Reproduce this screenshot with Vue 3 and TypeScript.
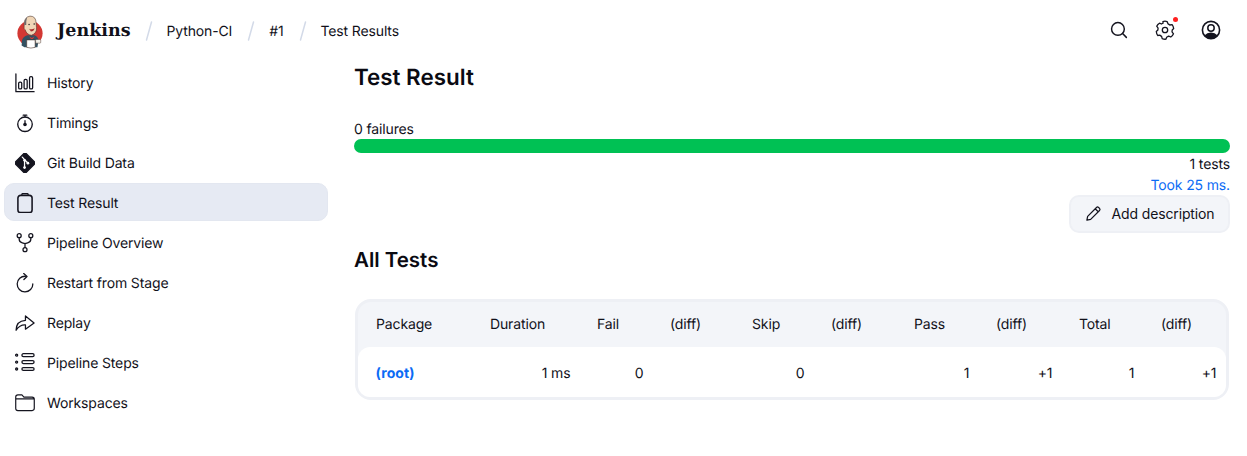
<template>
  <div class="page">
    <header class="topbar">
      <div class="crumbs">
        <a class="brand">
          <svg class="logo" width="28" height="35" viewBox="0 0 30 36">
            <circle cx="15" cy="20" r="13.5" fill="#d33833" />
            <path d="M6 33 L6.5 27 Q8 23 12 22 L20 22 Q24 24 24 28 L23 35 L9 35 Z" fill="#335061" />
            <path d="M8.8 11 Q8.5 2.5 15 1.5 Q21.5 1.5 21.5 9 L22 14 Q22.5 20 16.5 22 Q11.5 21.5 10 16.5 Q8 15.5 8.8 11 Z" fill="#f0d6b7" stroke="#49322a" stroke-width=".6" />
            <path d="M9 11 Q8.5 5 12 2.8 Q10.5 7 11 11 Z" fill="#6d6b6d" />
            <path d="M14 15 Q17 16.5 20 14.5 Q19 18 16 18 Z" fill="#a6322e" />
            <circle cx="14" cy="10.5" r=".8" fill="#231f20" />
            <circle cx="19.5" cy="10" r=".8" fill="#231f20" />
            <path d="M14 23 L17 25 L20 23 L18 26 L16 26 Z" fill="#d33833" />
            <path d="M11.5 27 L20.5 27 L20.5 35 Q16 36.5 11.5 35 Z" fill="#fff" stroke="#49322a" stroke-width=".6" />
            <rect x="21" y="26.5" width="5.5" height="4" rx="1" fill="#f4f1ea" stroke="#49322a" stroke-width=".5" />
          </svg>
          <span class="wordmark">Jenkins</span>
        </a>
        <template v-for="crumb in crumbs" :key="crumb">
          <svg class="slash" width="8" height="20" viewBox="0 0 8 20">
            <path d="M6.5 1 L1.5 19" stroke="#d3dae8" stroke-width="1.5" stroke-linecap="round" />
          </svg>
          <span class="crumb">{{ crumb }}</span>
        </template>
      </div>
      <div class="actions">
        <svg class="search" width="18" height="18" viewBox="0 0 22 22" fill="none" stroke="#14141f" stroke-width="1.8" stroke-linecap="round">
          <circle cx="9.7" cy="9.7" r="7.8" />
          <path d="M15.4 15.4 L20 20" />
        </svg>
        <span class="gear">
          <svg width="22" height="22" viewBox="0 0 22 22" fill="none" stroke="#14141f" stroke-width="1.3" stroke-linejoin="round">
            <path d="M8.9 2.6 Q11 1.8 13.1 2.6 L14 4.8 Q15 5.3 15.8 6 L18.1 5.6 Q19.5 7.4 19.7 9.6 L18.2 11 Q18.2 12 18 12.9 L19.5 14.8 Q18.6 16.9 16.8 18 L14.7 17.1 Q13.8 17.7 12.8 18 L11.9 20.2 Q10 20.4 8.2 19.6 L7.6 17.4 Q6.7 16.9 6 16.2 L3.7 16.5 Q2.5 14.7 2.3 12.5 L3.9 11 Q3.9 10 4.1 9.1 L2.7 7.2 Q3.7 5.2 5.5 4.2 L7.5 5 Q8.3 4.5 9.1 4.2 Z" />
            <circle cx="11" cy="11" r="2.7" />
          </svg>
          <i class="dot"></i>
        </span>
        <svg width="20" height="20" viewBox="0 0 20 20">
          <circle cx="10" cy="10" r="8.6" fill="none" stroke="#14141f" stroke-width="1.6" />
          <circle cx="10" cy="8" r="3.2" fill="none" stroke="#14141f" stroke-width="1.5" />
          <path d="M3.6 15.2 Q6 12.4 10 12.4 Q14 12.4 16.4 15.2 Q14 18.6 10 18.6 Q6 18.6 3.6 15.2 Z" fill="#14141f" />
        </svg>
      </div>
    </header>

    <div class="body">
      <nav class="sidebar">
        <a v-for="item in items" :key="item.label" class="item" :class="{ active: item.label === 'Test Result' }">
          <span class="item-icon">
            <svg width="20" height="20" viewBox="0 0 22 22" fill="none" stroke="#14141f" stroke-width="1.4" stroke-linecap="round" stroke-linejoin="round">
              <template v-if="item.icon === 'history'">
                <path d="M1 1 V20.5 H21" />
                <rect x="4" y="10" width="3.4" height="7.5" rx="1.4" />
                <rect x="10" y="7" width="3.4" height="10.5" rx="1.4" />
                <rect x="16" y="4" width="3.4" height="13.5" rx="1.4" />
              </template>
              <template v-else-if="item.icon === 'timings'">
                <circle cx="11" cy="12.4" r="8" stroke-width="1.5" />
                <path d="M11 4.4 V2.6 M9 2.4 H13 M11 8.4 V11.6" />
                <circle cx="11" cy="12.6" r="1.3" fill="#14141f" />
              </template>
              <template v-else-if="item.icon === 'git'">
                <path d="M11 -.6 L22.6 11 L11 22.6 L-.6 11 Z" fill="#14141f" stroke-width="1.5" />
                <path d="M8 4.5 L14 11 M10.5 8 V16" stroke="#fff" stroke-width="1.4" />
                <circle cx="10.5" cy="8" r="1.4" fill="#fff" stroke="none" />
                <circle cx="10.5" cy="16" r="1.5" fill="#fff" stroke="none" />
                <circle cx="14.2" cy="11.2" r="1.5" fill="#fff" stroke="none" />
              </template>
              <template v-else-if="item.icon === 'clipboard'">
                <rect x="3.2" y="2.6" width="15.6" height="19" rx="3" stroke-width="1.7" />
                <path d="M7.5 1.6 Q7.5 .6 9 .6 H13 Q14.5 .6 14.5 1.6" />
              </template>
              <template v-else-if="item.icon === 'pipeline'">
                <circle cx="4.6" cy="3" r="2.2" />
                <circle cx="17.4" cy="3" r="2.2" />
                <circle cx="11" cy="18.4" r="2.2" />
                <path d="M4.6 5.2 V7 Q4.6 10 8 10.8 L11 11.6 L14 10.8 Q17.4 10 17.4 7 V5.2 M11 11.6 V16.2" />
              </template>
              <template v-else-if="item.icon === 'restart'">
                <path d="M11.5 3.6 A8.6 8.6 0 1 0 19.6 12" />
                <path d="M9.6 .6 L13.2 3.8 L9.8 7.2" />
              </template>
              <template v-else-if="item.icon === 'replay'">
                <path d="M1.2 19 Q1.2 8.6 11.5 8 V3.2 L21 11 L11.5 17.8 V13.2 Q5.2 12.8 1.2 19 Z" />
              </template>
              <template v-else-if="item.icon === 'steps'">
                <rect x="7.6" y=".8" width="13.4" height="3.2" rx="1.6" />
                <rect x="7.6" y="8.4" width="13.4" height="3.2" rx="1.6" />
                <rect x="7.6" y="16" width="13.4" height="3.2" rx="1.6" />
                <circle cx="1.8" cy="2.4" r="1.1" />
                <circle cx="1.8" cy="10" r="1.1" />
                <circle cx="1.8" cy="17.6" r="1.1" />
              </template>
              <template v-else>
                <path d="M.8 4.5 Q.8 2.1 3.2 2.1 H7.6 L9.8 4.5 H18.8 Q21.2 4.5 21.2 6.9 V16.9 Q21.2 19.3 18.8 19.3 H3.2 Q.8 19.3 .8 16.9 Z M.8 6.5 H21.2" stroke-width="1.3" />
              </template>
            </svg>
          </span>
          <span>{{ item.label }}</span>
        </a>
      </nav>

      <main class="content">
        <h1>Test Result</h1>
        <div class="summary">
          <div class="failures">0 failures</div>
          <div class="bar"></div>
          <div class="right">1 tests</div>
          <div class="right took">Took 25 ms.</div>
        </div>
        <div class="desc-row">
          <button class="desc-btn">
            <svg width="17" height="17" viewBox="0 0 18 18" fill="none" stroke="#14141f" stroke-width="1.3" stroke-linejoin="round">
              <path d="M2 16 L2.8 12 L12.2 2.6 Q13.2 1.6 14.4 2.6 L15.4 3.6 Q16.4 4.8 15.4 5.8 L6 15.2 Z M10.8 4 L14 7.2" />
            </svg>
            Add description
          </button>
        </div>
        <h2>All Tests</h2>
        <div class="table-wrap">
          <table>
            <colgroup>
              <col v-for="(w, i) in widths" :key="i" :style="{ width: w + 'px' }" />
            </colgroup>
            <thead>
              <tr>
                <th v-for="(h, i) in headers" :key="i">{{ h }}</th>
              </tr>
            </thead>
            <tbody>
              <tr>
                <td class="pkg"><a>(root)</a></td>
                <td>1 ms</td>
                <td>0</td>
                <td></td>
                <td>0</td>
                <td></td>
                <td>1</td>
                <td>+1</td>
                <td>1</td>
                <td>+1</td>
              </tr>
            </tbody>
          </table>
        </div>
      </main>
    </div>
  </div>
</template>

<script setup lang="ts">
interface NavItem {
  label: string;
  icon: string;
}

const crumbs = ['Python-CI', '#1', 'Test Results'];

const items: NavItem[] = [
  { label: 'History', icon: 'history' },
  { label: 'Timings', icon: 'timings' },
  { label: 'Git Build Data', icon: 'git' },
  { label: 'Test Result', icon: 'clipboard' },
  { label: 'Pipeline Overview', icon: 'pipeline' },
  { label: 'Restart from Stage', icon: 'restart' },
  { label: 'Replay', icon: 'replay' },
  { label: 'Pipeline Steps', icon: 'steps' },
  { label: 'Workspaces', icon: 'folder' },
];

const headers = ['Package', 'Duration', 'Fail', '(diff)', 'Skip', '(diff)', 'Pass', '(diff)', 'Total', '(diff)'];
// Column widths read off the reference table.
const widths = [116, 107, 73, 82, 79, 83, 82, 83, 82, 81];
</script>

<style>
body {
  background: #fff;
}
</style>

<style scoped>
.page {
  font-family: Inter, "Liberation Sans", sans-serif;
  font-size: 14px;
  letter-spacing: -0.14px;
  color: #11111a;
  width: 1247px;
  height: 456px;
  overflow: hidden;
  text-rendering: geometricPrecision;
}

.topbar {
  height: 63px;
  display: flex;
  align-items: center;
  justify-content: space-between;
  padding: 0 26px 1px 16px;
  box-sizing: border-box;
}

.crumbs {
  display: flex;
  align-items: center;
}

.brand {
  display: flex;
  align-items: center;
  gap: 13px;
  margin-right: 14px;
}

.wordmark {
  font-family: "DejaVu Serif", serif;
  font-weight: 700;
  font-size: 17.5px;
  letter-spacing: 0;
}

.slash {
  margin-right: 14px;
}

.crumb {
  margin-right: 15px;
}

.actions {
  display: flex;
  align-items: center;
  gap: 25px;
  margin-bottom: 2px;
}

.search {
  margin-right: 1px;
}

.gear {
  position: relative;
  display: flex;
}

.dot {
  position: absolute;
  top: -2px;
  right: -1.5px;
  width: 5px;
  height: 5px;
  border-radius: 50%;
  background: #ff2020;
}

.body {
  display: flex;
}

.sidebar {
  width: 324px;
  margin-left: 4px;
  flex-shrink: 0;
  display: flex;
  flex-direction: column;
}

.item {
  height: 38px;
  margin-bottom: 2px;
  display: flex;
  align-items: center;
  gap: 12px;
  padding: 2px 0 0 11px;
  box-sizing: border-box;
  border-radius: 10px;
}

.item.active {
  background: #e6eaf3;
  border: 1px solid #e3e7f0;
  padding-left: 10px;
}

.item-icon {
  display: flex;
  width: 20px;
  height: 20px;
}

.content {
  margin-left: 26px;
  width: 876px;
}

h1 {
  font-size: 22.4px;
  font-weight: 600;
  line-height: 30px;
  margin: 0 0 27px;
  letter-spacing: 0;
  color: #0a0a12;
}

.summary .failures {
  line-height: 19px;
}

.summary .bar {
  height: 14px;
  border-radius: 7px;
  background: #00c154;
  margin: 0 0 1px;
}

.summary .right {
  text-align: right;
  line-height: 21px;
}

.summary .took {
  color: #0b6bf5;
  line-height: 20px;
  padding-top: 1px;
}

.desc-row {
  display: flex;
  justify-content: flex-end;
  margin-top: -1px;
}

.desc-btn {
  font: inherit;
  color: inherit;
  letter-spacing: inherit;
  height: 38px;
  width: 161px;
  display: flex;
  align-items: center;
  justify-content: center;
  gap: 10px;
  background: #f3f5f9;
  border: 2px solid #eef0f5;
  border-radius: 10px;
  padding: 0 0 1px;
}

h2 {
  font-size: 20.5px;
  font-weight: 600;
  line-height: 26px;
  margin: 14px 0 26px;
  letter-spacing: 0;
  color: #0a0a12;
}

.table-wrap {
  width: 874px;
  margin-left: 1px;
  box-sizing: border-box;
  background: #f3f5f9;
  border: 3px solid #eef0f5;
  border-radius: 16px;
}

table {
  table-layout: fixed;
  width: 868px;
  border-collapse: separate;
  border-spacing: 0;
}

th {
  font-weight: 400;
  height: 45px;
  text-align: left;
  padding: 0 0 1px 16px;
  box-sizing: border-box;
}

th:first-child {
  padding-left: 18px;
}

td {
  background: #fff;
  height: 50px;
  box-sizing: border-box;
  text-align: right;
  padding: 2px 10.6px 0 0;
}

td:first-child {
  border-radius: 12px 0 0 12px;
}

td:last-child {
  border-radius: 0 12px 12px 0;
  padding-right: 9.6px;
}

.pkg {
  text-align: left;
  padding-left: 17.6px;
}

.pkg a {
  color: #0b6bf5;
  font-weight: 700;
  letter-spacing: 0.1px;
}
</style>
